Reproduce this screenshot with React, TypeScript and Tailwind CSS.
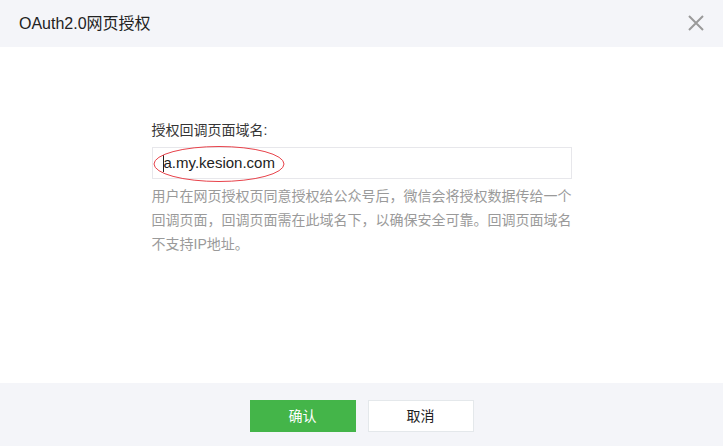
const FONT = "font-['Liberation_Sans','Noto_Sans_CJK_SC',sans-serif]";

function CloseIcon() {
  return (
    <svg width="16" height="16" viewBox="0 0 16 16" className="block">
      <path d="M1 1 L15 15 M15 1 L1 15" stroke="#9a9a9a" strokeWidth="2" fill="none" />
    </svg>
  );
}

export default function App() {
  return (
    <div className={`${FONT} flex h-[446px] w-[723px] flex-col bg-white`}>
      <header className="flex h-[47px] shrink-0 items-center justify-between bg-[#f4f5f9] pl-[19px] pr-[19px]">
        <h1 className="text-[16px] text-[#222]">OAuth2.0网页授权</h1>
        <button className="mt-[-1px] text-[#9a9a9a]">
          <CloseIcon />
        </button>
      </header>

      <main className="flex flex-1 justify-center pt-[73px]">
        <div className="w-[420px]">
          <p className="text-[14px] leading-[20px] text-[#353535]">授权回调页面域名:</p>
          <div className="relative mt-[7px]">
            <div className="flex h-[32px] items-center border border-[#e7e7eb] pl-[10px]">
              <span className="mr-[0px] h-[17px] w-px bg-[#222]" />
              <span className="text-[15px] text-[#222]">a.my.kesion.com</span>
            </div>
            <svg width="132" height="38" viewBox="0 0 132 38" className="pointer-events-none absolute left-[1px] top-[-2px]">
              <ellipse cx="66" cy="19" rx="65" ry="17.5" fill="none" stroke="#e8424a" strokeWidth="1" />
            </svg>
          </div>
          <p className="mt-[5px] text-[14px] leading-[24px] text-[#9a9a9a]">
            用户在网页授权页同意授权给公众号后，微信会将授权数据传给一个回调页面，回调页面需在此域名下，以确保安全可靠。回调页面域名不支持IP地址。
          </p>
        </div>
      </main>

      <footer className="flex h-[63px] shrink-0 justify-center gap-[12px] bg-[#f4f5f9] pt-[17px]">
        <button className="h-[32px] w-[106px] bg-[#44b549] text-[14px] text-white">确认</button>
        <button className="h-[32px] w-[106px] border border-[#e4e8eb] bg-white text-[14px] text-[#222]">取消</button>
      </footer>
    </div>
  );
}
